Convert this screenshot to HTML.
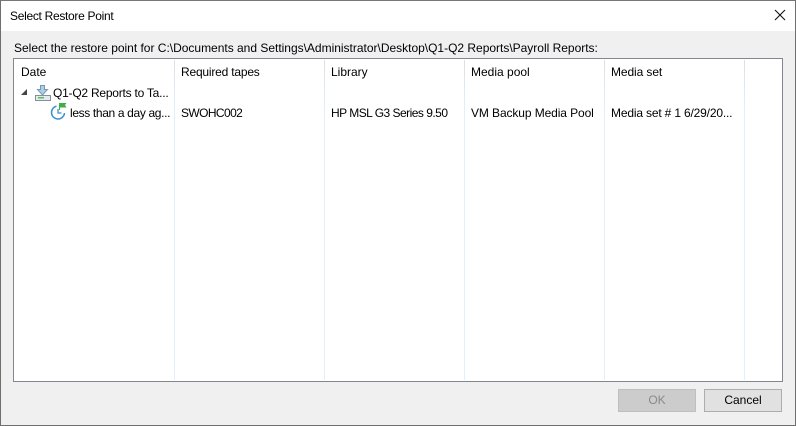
<!DOCTYPE html>
<html><head><meta charset="utf-8"><style>
html,body{margin:0;padding:0}
body{width:796px;height:426px;position:relative;overflow:hidden;background:#f0f0f0;font-family:"Liberation Sans",sans-serif;font-size:12px;color:#000}
.t{position:absolute;white-space:nowrap;line-height:15px}
.b{position:absolute;box-sizing:border-box}
.sep{position:absolute;top:60px;width:1px;height:320px;background:linear-gradient(#dedede 0,#dfe6ee 20px,#e3effa 50px,#e3effa 100%)}
</style></head><body>
<div class="b" style="left:0;top:0;width:796px;height:426px;border:1px solid #6f6f6f;border-top-color:#777"></div>
<div class="b" style="left:1px;top:1px;width:794px;height:30px;background:#fff"></div>
<div class="t" style="left:10px;top:9px;letter-spacing:-.3px">Select Restore Point</div>
<svg class="b" style="left:774px;top:9px" width="12" height="12"><path d="M1 1L11 11M11 1L1 11" stroke="#111" stroke-width="1.1" fill="none"/></svg>
<div class="t" style="left:14px;top:41px;letter-spacing:-.01px">Select the restore point for C:\Documents and Settings\Administrator\Desktop\Q1-Q2 Reports\Payroll Reports:</div>
<div class="b" style="left:13px;top:58px;width:770px;height:324px;border:1px solid #828790;background:#fff"></div>
<div class="sep" style="left:174px"></div>
<div class="sep" style="left:324px"></div>
<div class="sep" style="left:464px"></div>
<div class="sep" style="left:604px"></div>
<div class="sep" style="left:744px"></div>
<div class="t" style="left:21px;top:65px">Date</div>
<div class="t" style="left:181px;top:65px;letter-spacing:-.2px">Required tapes</div>
<div class="t" style="left:331px;top:65px">Library</div>
<div class="t" style="left:471px;top:65px">Media pool</div>
<div class="t" style="left:611px;top:65px;letter-spacing:-.1px">Media set</div>
<svg class="b" style="left:21px;top:89px" width="7" height="7"><path d="M6 0V6H0Z" fill="#444"/></svg>
<svg class="b" style="left:35px;top:85px" width="18" height="17">
<rect x=".5" y="10.500" width="15" height="5" fill="#e4eaef" stroke="#8090a0"/>
<path d="M5.500 .5H9.500V4.500H12.500L7.500 10 2.500 4.500H5.500Z" fill="#a9cfeb" stroke="#7d98ad"/>
<rect x="3" y="12" width="6" height="1.500" fill="#57c05a"/>
</svg>
<div class="t" style="left:53px;top:86px;letter-spacing:-.23px">Q1-Q2 Reports to Ta...</div>
<svg class="b" style="left:50px;top:103px" width="18" height="18">
<path d="M6.500 3.200A6.500 6.500 0 1 0 14.500 10" fill="none" stroke="#3d93cf" stroke-width="1.500"/>
<path d="M8 6V10H11.500" fill="none" stroke="#3d93cf" stroke-width="1.300"/>
<path d="M9 0H16.500L15 2L16.500 4.500H10V7H9Z" fill="#3fae49"/>
</svg>
<div class="t" style="left:70px;top:106px;letter-spacing:-.35px">less than a day ag...</div>
<div class="t" style="left:181px;top:106px;letter-spacing:-.6px">SWOHC002</div>
<div class="t" style="left:331px;top:106px;letter-spacing:-.52px">HP MSL G3 Series 9.50</div>
<div class="t" style="left:471px;top:106px;letter-spacing:-.1px">VM Backup Media Pool</div>
<div class="t" style="left:611px;top:106px;letter-spacing:-.17px">Media set # 1 6/29/20...</div>
<div class="b" style="left:618px;top:389px;width:78px;height:23px;background:#cccccc;border:1px solid #bfbfbf;color:#8a8a8a;text-align:center;line-height:21px">OK</div>
<div class="b" style="left:704px;top:389px;width:78px;height:23px;background:#e1e1e1;border:1px solid #adadad;text-align:center;line-height:21px">Cancel</div>
</body></html>
